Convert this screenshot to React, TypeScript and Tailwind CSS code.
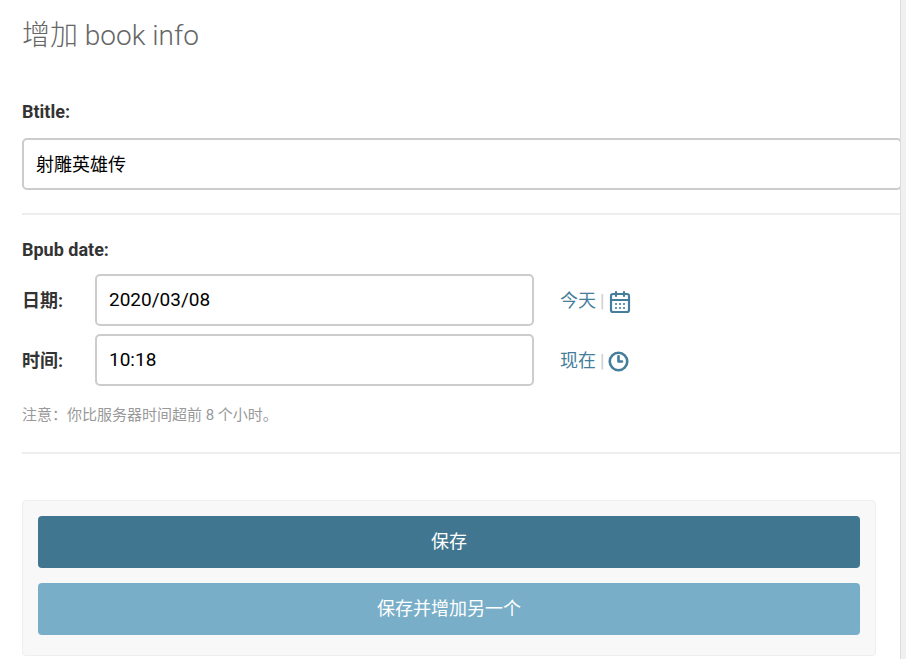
import React from "react";
import { CalendarDays, Clock3 } from "lucide-react";

const font = { fontFamily: '"Roboto", "Noto Sans CJK SC", sans-serif' };

export default function App(): React.JSX.Element {
  return (
    <div className="relative h-[659px] w-[906px] overflow-hidden bg-white" style={font}>
      <div className="absolute right-0 top-0 h-full w-[6px] bg-[#f0f0f0] border-l border-[#ddd]" />
      <div className="ml-[22px] w-[878px] pt-[18px]">
        <h1 className="text-[28px] font-light leading-[36px] text-[#666]">增加 book info</h1>

        <div className="mt-[46px] text-[18px] font-bold leading-[24px] text-[#333]">Btitle:</div>
        <div className="mt-[14px] flex h-[52px] w-[880px] items-center rounded-[5px] border-2 border-[#ccc] px-[12px] text-[18px] text-black">
          射雕英雄传
        </div>
        <div className="mt-[23px] h-[2px] bg-[#eee]" />

        <div className="mt-[23px] text-[18px] font-bold leading-[24px] text-[#333]">Bpub date:</div>
        <div className="mt-[12px] flex flex-col gap-[8px]">
          {[
            { label: "日期:", value: "2020/03/08", link: "今天", icon: <CalendarDays className="h-[24px] w-[24px] text-[#447e9b]" strokeWidth={2.2} /> },
            { label: "时间:", value: "10:18", link: "现在", icon: <Clock3 className="h-[21px] w-[21px] text-[#447e9b]" strokeWidth={3} /> },
          ].map((r) => (
            <div key={r.label} className="flex items-center">
              <div className="w-[73px] text-[18px] font-bold text-[#333]">{r.label}</div>
              <div className="flex h-[52px] w-[439px] items-center rounded-[5px] border-2 border-[#ccc] px-[12px] text-[19px] text-black">
                {r.value}
              </div>
              <div className="ml-[26px] flex items-center gap-[4px] text-[18px] text-[#447e9b]">
                {r.link}
                <span className="text-[#ccc]">|</span>
                <span className="mt-[3px]">{r.icon}</span>
              </div>
            </div>
          ))}
        </div>
        <div className="mt-[18px] text-[15px] text-[#999]">注意：你比服务器时间超前 8 个小时。</div>
        <div className="mt-[25px] h-[2px] bg-[#eee]" />

        <div className="mt-[46px] w-[854px] rounded-[4px] border border-[#eee] bg-[#f8f8f8] px-[15px] pt-[15px] pb-[20px]">
          <div className="flex h-[52px] items-center justify-center rounded-[4px] bg-[#417690] text-[18px] text-white">保存</div>
          <div className="mt-[15px] flex h-[52px] items-center justify-center rounded-[4px] bg-[#79aec8] text-[18px] text-white">保存并增加另一个</div>
        </div>
      </div>
    </div>
  );
}
